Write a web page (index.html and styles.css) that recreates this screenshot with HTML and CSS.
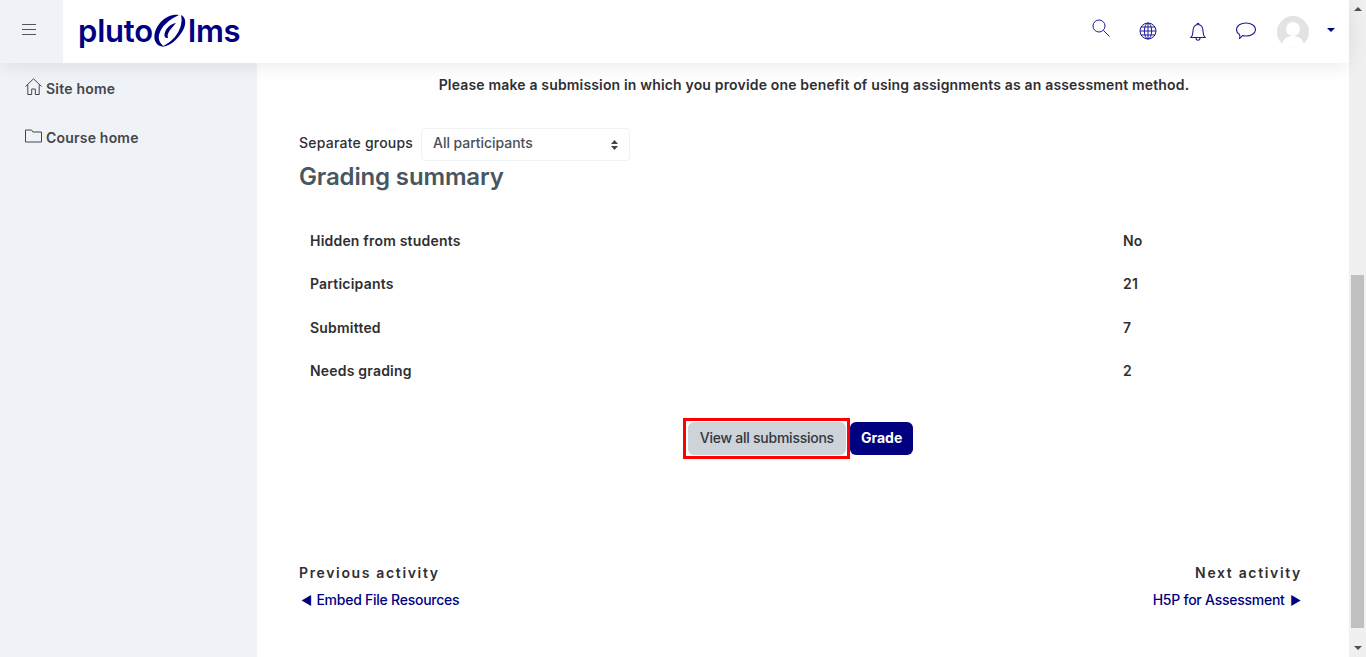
FILE: index.html
```html
<!DOCTYPE html>
<html lang="en">
<head>
  <meta charset="UTF-8" />
  <meta name="viewport" content="width=device-width, initial-scale=1.0"/>
  <title>Assignment</title>
  <link rel="stylesheet" href="styles.css">
</head>
<body>
  <div class="page">
    <header class="topbar">
      <button class="menu-toggle" aria-label="Menu">
        <svg width="14" height="12" viewBox="0 0 14 12"><path d="M0 .5h14M0 5.500h14M0 10.500h14" stroke="#555" fill="none"/></svg>
      </button>
      <a class="logo" href="#">
        <span>pluto</span>
        <svg class="logo-mark" width="34" height="34" viewBox="0 0 34 34" fill="#000080">
          <path d="M26 2C14 0 3 11 1.500 22C.5 29 5 34 11 33.500C7.500 31 5 27 6 22C8 13 17 6 26 2z"/>
          <path d="M28 2C34 5 33 13 29 19C24 27 16 34 9 33.500C15 31 22 25 25 19.500C28 14 29.500 8 28 2z"/>
          <path d="M23 10C17 11 12.500 16 11.500 21C11 24 12.500 25.500 15 25C14 22.500 15 20 17 17C19 14.500 21 12.500 23 10z"/>
        </svg>
        <span>lms</span>
      </a>
      <nav class="top-icons">
        <svg class="icon-search" width="18" height="18" viewBox="0 0 18 18"><circle cx="7" cy="7" r="6" fill="none" stroke="#1d1d9b"/><path d="M11.500 11.500l6 6" stroke="#1d1d9b"/></svg>
        <svg class="icon-globe" width="18" height="18" viewBox="0 0 18 18" fill="none" stroke="#1d1d9b" stroke-width="1"><circle cx="9" cy="9" r="8"/><ellipse cx="9" cy="9" rx="3.600" ry="8"/><path d="M9 1v16M1 9h16M2 5h14M2 13h14"/></svg>
        <svg class="icon-bell" width="18" height="20" viewBox="0 0 18 20" fill="none" stroke="#1d1d9b" stroke-width="1.100"><path d="M2 15.500c1.500-1.500 2-3 2-6.500C4 5 6 2.500 9 2.500S14 5 14 9c0 3.500.5 5 2 6.500z"/><path d="M7 16c0 3 4 3 4 0M8 2.500C8 1 10 1 10 2.500"/></svg>
        <svg class="icon-chat" width="20" height="18" viewBox="0 0 20 18" fill="none" stroke="#1d1d9b" stroke-width="1.100"><path d="M10 1c5 0 9.500 2.500 9.500 6.500S15 14 10 14c-1.500 0-2.500 0-3.500-.5C5.500 15 4 16.500 3.500 16.500c.5-1 .5-2.500 0-4C1.500 11.500.5 9.500.5 7.500.5 3.500 5 1 10 1z"/></svg>
        <span class="avatar">
          <svg width="32" height="32" viewBox="0 0 32 32"><circle cx="16" cy="16" r="16" fill="#e3e3e3"/><circle cx="16" cy="13" r="7" fill="#fff"/><path d="M5 28c2-6 6-8 11-8s9 2 11 8c-3 3-7 4-11 4s-8-1-11-4z" fill="#fff"/></svg>
        </span>
        <span class="caret"></span>
      </nav>
    </header>

    <div class="body-row">
      <aside class="sidebar">
        <a class="side-link" href="#">
          <svg width="17" height="17" viewBox="0 0 17 17" fill="none" stroke="#444"><path d="M.5 8.500L8.500.8l8 7.700M2.800 6.800v9.700h3.900v-5.500h3.600v5.500h3.900V6.800"/></svg>
          <span>Site home</span>
        </a>
        <a class="side-link" href="#">
          <svg width="17" height="14" viewBox="0 0 17 14" fill="none" stroke="#444"><path d="M.5 13V1h6l1.500 2h8.500v10z"/></svg>
          <span>Course home</span>
        </a>
      </aside>

      <main class="content">
        <p class="intro">Please make a submission in which you provide one benefit of using assignments as an assessment method.</p>

        <div class="group-row">
          <label class="group-label">Separate groups</label>
          <div class="select-box">
            <span>All participants</span>
            <svg width="7" height="10" viewBox="0 0 7 10"><path d="M3.500 0L7 4H0zM3.500 10L0 6h7z" fill="#444"/></svg>
          </div>
        </div>

        <h2 class="summary-title">Grading summary</h2>

        <div class="summary">
          <div class="summary-row"><span>Hidden from students</span><span>No</span></div>
          <div class="summary-row"><span>Participants</span><span>21</span></div>
          <div class="summary-row"><span>Submitted</span><span>7</span></div>
          <div class="summary-row"><span>Needs grading</span><span>2</span></div>
        </div>

        <div class="actions">
          <div class="highlight"><a class="btn btn-grey" href="#">View all submissions</a></div>
          <a class="btn btn-navy" href="#">Grade</a>
        </div>

        <div class="activity-nav">
          <div>
            <p class="nav-label">Previous activity</p>
            <a class="nav-link" href="#"><span class="nav-arrow">◄</span> Embed File Resources</a>
          </div>
          <div class="nav-next">
            <p class="nav-label">Next activity</p>
            <a class="nav-link" href="#">H5P for Assessment <span class="nav-arrow">►</span></a>
          </div>
        </div>
      </main>
    </div>
  </div>

  <div class="scrollbar">
    <span class="arrow-up"></span>
    <div class="track"><div class="thumb"></div></div>
    <span class="arrow-down"></span>
  </div>
</body>
</html>
```

FILE: styles.css
```css
* {
  margin: 0;
  padding: 0;
  box-sizing: border-box;
}
html, body {
  height: 100%;
  overflow: hidden;
}
body {
  font-family: Inter, "Noto Sans", sans-serif;
  font-size: 14px;
  font-weight: 500;
  color: #2f2f33;
  background: #fff;
  display: flex;
}
a {
  text-decoration: none;
}
.page {
  flex: 1;
  display: flex;
  flex-direction: column;
  min-width: 0;
}
.topbar {
  height: 63px;
  background: #fff;
  display: flex;
  align-items: center;
  box-shadow: 0 2px 20px rgba(0,0,0,0.09);
  position: relative;
  z-index: 2;
}
.menu-toggle {
  width: 63px;
  height: 63px;
  background: #eff3f8;
  border: none;
  display: flex;
  align-items: center;
  justify-content: center;
  padding-right: 6px;
  padding-bottom: 4px;
}
.logo {
  display: flex;
  align-items: center;
  margin-left: 15px;
  padding-bottom: 2px;
  font-size: 31px;
  font-weight: 600;
  letter-spacing: -.2px;
  color: #000080;
  line-height: 1;
}
.logo-mark {
  margin: -2px 1px 0 0;
}
.top-icons {
  margin-left: auto;
  display: flex;
  align-items: center;
  padding-right: 14px;
}
.icon-search {
  margin-top: -8px;
  margin-right: 1px;
}
.icon-globe {
  margin-left: 28px;
  margin-top: -1px;
}
.icon-bell {
  margin-left: 32px;
}
.icon-chat {
  margin-left: 29px;
  margin-top: -2px;
}
.avatar {
  display: flex;
  margin-left: 21px;
}
.caret {
  width: 0;
  height: 0;
  border-left: 4px solid transparent;
  border-right: 4px solid transparent;
  border-top: 4px solid #000080;
  margin-left: 18px;
  margin-top: -4px;
}
.body-row {
  flex: 1;
  display: flex;
  min-height: 0;
}
.sidebar {
  width: 257px;
  flex-shrink: 0;
  background: #eff3f8;
  padding: 16px 0 0 25px;
  display: flex;
  flex-direction: column;
  gap: 30px;
}
.side-link {
  display: flex;
  align-items: center;
  gap: 4px;
  color: #45454a;
  font-weight: 600;
  letter-spacing: .2px;
  height: 19px;
}
.side-link svg {
  margin-top: -4px;
}
.content {
  flex: 1;
  padding: 0 47px 0 42px;
  min-width: 0;
}
.intro {
  text-align: center;
  font-weight: 600;
  letter-spacing: .165px;
  margin-top: 13px;
  padding-left: 27px;
  line-height: 17px;
}
.group-row {
  display: flex;
  align-items: center;
  margin-top: 35px;
  gap: 8px;
}
.group-label {
  letter-spacing: .22px;
  padding-bottom: 5px;
}
.select-box {
  width: 209px;
  height: 33px;
  border: 1px solid #f0f1f3;
  border-radius: 4px;
  display: flex;
  align-items: center;
  justify-content: space-between;
  padding: 0 11px 4px;
  color: #4a4f57;
  letter-spacing: -.05px;
}
.select-box svg {
  margin-top: 4px;
}
.summary-title {
  font-size: 24px;
  font-weight: 600;
  letter-spacing: -.15px;
  line-height: 32px;
  color: #47565f;
}
.summary {
  margin-top: 26px;
}
.summary-row {
  display: flex;
  height: 43.300px;
  align-items: center;
  padding-left: 11px;
  font-weight: 600;
  letter-spacing: .2px;
}
.summary-row span:first-child {
  width: 813px;
}
.actions {
  display: flex;
  justify-content: center;
  align-items: center;
  margin-top: 25.400px;
  padding-right: 5px;
}
.highlight {
  border: 3px solid #f00;
  padding: 1px 1px 1px 2px;
  display: flex;
}
.btn {
  height: 33px;
  display: flex;
  align-items: center;
  padding: 0 12px 2px;
  border-radius: 6px;
}
.btn-grey {
  background: #ced2d9;
  color: #32363d;
  letter-spacing: -.25px;
}
.btn-navy {
  background: #000080;
  color: #fff;
  font-weight: 700;
  padding: 0 11px 2px;
}
.activity-nav {
  display: flex;
  justify-content: space-between;
  margin-top: 105px;
}
.nav-label {
  font-weight: 600;
  letter-spacing: 1.650px;
  line-height: 17px;
}
.nav-link {
  display: block;
  color: #000080;
  margin-top: 10px;
  line-height: 17px;
  letter-spacing: -.25px;
}
.nav-arrow {
  font-size: 12px;
  padding: 0 1px 0 2px;
}
.nav-next {
  text-align: right;
}
.scrollbar {
  width: 17px;
  flex-shrink: 0;
  background: #f0f0f0;
  display: flex;
  flex-direction: column;
  align-items: center;
}
.arrow-up, .arrow-down {
  width: 0;
  height: 0;
  border-left: 4px solid transparent;
  border-right: 4px solid transparent;
}
.arrow-up {
  border-bottom: 4px solid #505050;
  margin: 7px 0 6px;
}
.arrow-down {
  border-top: 4px solid #505050;
  margin: 6px 0 7px;
}
.track {
  flex: 1;
  width: 100%;
  display: flex;
  flex-direction: column;
  justify-content: flex-end;
  padding: 0 2px 12px;
}
.thumb {
  height: 353px;
  background: #c0c0c0;
}
```
